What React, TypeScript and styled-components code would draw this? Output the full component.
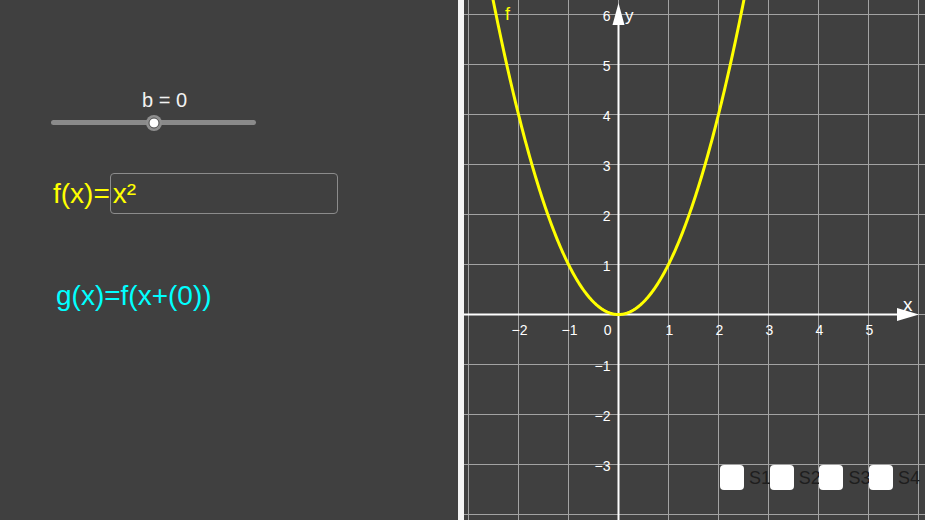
import React from 'react'
import styled, { createGlobalStyle } from 'styled-components'

const GlobalStyle = createGlobalStyle`
  html, body {
    margin: 0;
    padding: 0;
    background: #404040;
    overflow: hidden;
  }
  body {
    font-family: 'Liberation Sans', Arial, sans-serif;
  }
`

// graph geometry (px, local to the graph panel)
const GRAPH_W = 461
const GRAPH_H = 520
const OX = 154.5
const OY = 314.5
const UNIT = 50

const X_TICKS = [-2, -1, 1, 2, 3, 4, 5]
const Y_TICKS = [-3, -2, -1, 1, 2, 3, 4, 5, 6]

const fmt = (n: number) => (n < 0 ? `\u2212${-n}` : `${n}`)

const curvePoints = () => {
  const pts: string[] = []
  for (let x = -2.7; x <= 2.7001; x += 0.02) {
    pts.push(`${(OX + x * UNIT).toFixed(2)},${(OY - x * x * UNIT).toFixed(2)}`)
  }
  return pts.join(' ')
}

const Graph = () => {
  const vLines: number[] = []
  for (let x = OX - 3 * UNIT; x < GRAPH_W; x += UNIT) vLines.push(x)
  const hLines: number[] = []
  for (let y = OY - 6 * UNIT; y < GRAPH_H; y += UNIT) hLines.push(y)

  return (
    <GraphSvg width={GRAPH_W} height={GRAPH_H} viewBox={`0 0 ${GRAPH_W} ${GRAPH_H}`}>
      <g stroke="#a3a3a3" strokeWidth={1}>
        {vLines.map((x) => (
          <line key={`v${x}`} x1={x} y1={0} x2={x} y2={GRAPH_H} />
        ))}
        {hLines.map((y) => (
          <line key={`h${y}`} x1={0} y1={y} x2={GRAPH_W} y2={y} />
        ))}
      </g>

      {/* axes */}
      <line x1={0} y1={OY} x2={440} y2={OY} stroke="#fff" strokeWidth={2} />
      <polygon points={`455,${OY} 433,${OY - 6.5} 433,${OY + 6.5}`} fill="#fff" />
      <line x1={OX} y1={GRAPH_H} x2={OX} y2={18} stroke="#fff" strokeWidth={2} />
      <polygon points={`${OX},3 ${OX - 6},25 ${OX + 6},25`} fill="#fff" />

      <g fill="#fff" fontSize={14} fontFamily="'Liberation Sans', Arial, sans-serif">
        {X_TICKS.map((n) => (
          <text key={`x${n}`} x={OX + n * UNIT + 1} y={335} textAnchor="middle">
            {fmt(n)}
          </text>
        ))}
        <text x={OX - 7} y={335} textAnchor="end">
          0
        </text>
        {Y_TICKS.map((n) => (
          <text key={`y${n}`} x={OX - 8} y={OY - n * UNIT + 6} textAnchor="end">
            {fmt(n)}
          </text>
        ))}
        <text x={161} y={20.5} fontSize={17}>
          y
        </text>
        <text x={439} y={310.5} fontSize={19}>
          x
        </text>
      </g>

      <polyline points={curvePoints()} fill="none" stroke="#ffff00" strokeWidth={3} strokeLinejoin="round" />
      <text x={41} y={20} fill="#ffff00" fontSize={18} fontFamily="'Liberation Sans', Arial, sans-serif">
        f
      </text>
    </GraphSvg>
  )
}

const App = () => {
  return (
    <>
      <GlobalStyle />
      <Page>
        <LeftPanel>
          <SliderBlock>
            <SliderLabel>b = 0</SliderLabel>
            <SliderTrack>
              <Knob />
            </SliderTrack>
          </SliderBlock>

          <FunctionRow>
            <MathText color="#ffff00">f(x)=</MathText>
            <InputBox>x²</InputBox>
          </FunctionRow>

          <MathText color="#00ffff" $indent={5} $top={66}>
            g(x)=f(x+(0))
          </MathText>
        </LeftPanel>

        <Divider />

        <GraphPanel>
          <Graph />
          <CheckRow>
            {['S1', 'S2', 'S3', 'S4'].map((s) => (
              <CheckItem key={s}>
                <CheckBox />
                <CheckLabel>{s}</CheckLabel>
              </CheckItem>
            ))}
          </CheckRow>
        </GraphPanel>
      </Page>
    </>
  )
}

const Page = styled.div`
  display: flex;
  width: 925px;
  height: 520px;
  background: #404040;
  overflow: hidden;
`

const LeftPanel = styled.div`
  width: 458px;
  flex: none;
  box-sizing: border-box;
  padding: 89px 0 0 51px;
  display: flex;
  flex-direction: column;
  align-items: flex-start;
  background: #404040;
`

const SliderBlock = styled.div`
  width: 205px;
`

const SliderLabel = styled.div`
  color: #f2f2f2;
  font-size: 20px;
  line-height: 23px;
  padding-left: 91px;
`

const SliderTrack = styled.div`
  position: relative;
  height: 5px;
  margin-top: 8px;
  border-radius: 3px;
  background: #8a8a8a;
`

const Knob = styled.div`
  position: absolute;
  left: 50%;
  top: 50%;
  width: 9px;
  height: 9px;
  transform: translate(-50%, -50%);
  border-radius: 50%;
  background: #fff;
  border: 1px solid #4a4a4a;
  box-shadow: 0 0 0 2.5px #8f8f8f;
`

const FunctionRow = styled.div`
  display: flex;
  align-items: flex-start;
  margin: 48px 0 0 2px;
`

const MathText = styled.div<{ color: string; $indent?: number; $top?: number }>`
  color: ${({ color }) => color};
  font-size: 28px;
  line-height: 32px;
  white-space: nowrap;
  padding-top: ${({ $top }) => ($top === undefined ? 5 : 0)}px;
  margin-top: ${({ $top }) => $top ?? 0}px;
  margin-left: ${({ $indent }) => $indent ?? 0}px;
`

const InputBox = styled.div`
  width: 228px;
  height: 41px;
  box-sizing: border-box;
  border: 1px solid #8c8c8c;
  border-radius: 4px;
  padding: 4px 0 0 2px;
  color: #ffff00;
  font-size: 28px;
  line-height: 32px;
`

const Divider = styled.div`
  width: 6px;
  flex: none;
  background: #f5f5f5;
`

const GraphPanel = styled.div`
  position: relative;
  width: ${GRAPH_W}px;
  height: ${GRAPH_H}px;
  flex: none;
  background: #404040;
`

const GraphSvg = styled.svg`
  display: block;
`

const CheckRow = styled.div`
  position: absolute;
  left: 256px;
  top: 465px;
  display: flex;
`

const CheckItem = styled.div`
  width: 49.7px;
  display: flex;
  align-items: flex-start;
  overflow: visible;
`

const CheckBox = styled.div`
  width: 24px;
  height: 25px;
  flex: none;
  border-radius: 4px;
  background: #fff;
  position: relative;
  z-index: 1;
`

const CheckLabel = styled.div`
  margin-left: 5px;
  padding-top: 1px;
  color: #1e1e1e;
  font-size: 18px;
  line-height: 25px;
  white-space: nowrap;
`

export default App
